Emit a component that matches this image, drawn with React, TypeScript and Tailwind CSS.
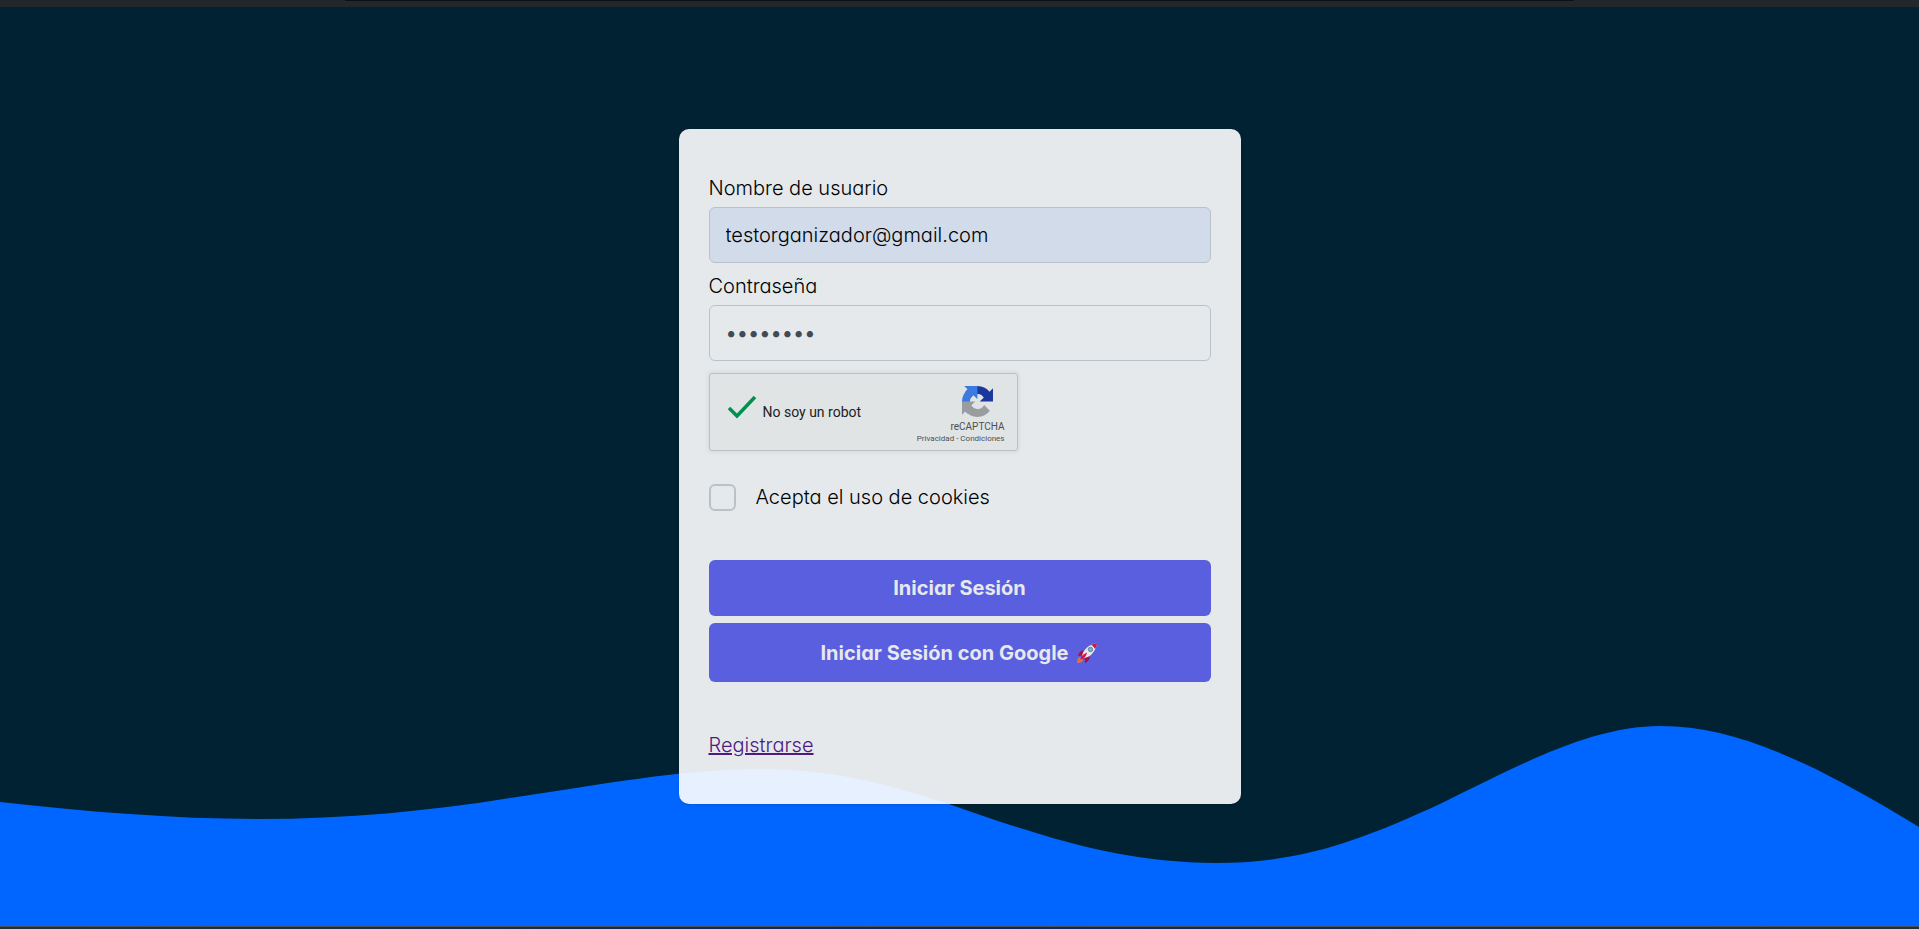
import React, { useState } from 'react';

function RecaptchaLogo() {
  return (
    <svg width="31" height="31" viewBox="0 0 64 64" aria-hidden="true">
      <path
        fill="#1c3aa9"
        d="M64 31.955l-.033-1.37V4.687l-7.16 7.16C50.948 4.674 42.033.093 32.05.093c-10.4 0-19.622 4.96-25.458 12.64l11.736 11.86a15.55 15.55 0 0 1 4.754-5.334c2.05-1.6 4.952-2.906 8.968-2.906.485 0 .86.057 1.135.163 4.976.393 9.288 3.14 11.828 7.124l-8.307 8.307L64 31.953"
      />
      <path
        fill="#4285f4"
        d="M31.862.094l-1.37.033H4.594l7.16 7.16C4.58 13.147 0 22.06 0 32.046c0 10.4 4.96 19.622 12.64 25.458L24.5 45.768a15.55 15.55 0 0 1-5.334-4.754c-1.6-2.05-2.906-4.952-2.906-8.968 0-.485.057-.86.163-1.135.393-4.976 3.14-9.288 7.124-11.828l8.307 8.307L31.86.095"
      />
      <path
        fill="#ababab"
        d="M.001 32.045l.033 1.37v25.898l7.16-7.16c5.86 7.173 14.774 11.754 24.76 11.754 10.4 0 19.622-4.96 25.458-12.64l-11.736-11.86a15.55 15.55 0 0 1-4.754 5.334c-2.05 1.6-4.952 2.906-8.968 2.906-.485 0-.86-.057-1.135-.163-4.976-.393-9.288-3.14-11.828-7.124l8.307-8.307c-10.522.04-22.4.066-27.295-.005"
      />
    </svg>
  );
}

function Rocket() {
  return (
    <svg width="22" height="22" viewBox="0 0 44 44" aria-hidden="true">
      <path fill="#be0f45" d="M16 17 C10 17 5 21 4 28 L13 27 Z" />
      <path fill="#be0f45" d="M27 28 C28 34 25 39 18 42 L17 31 Z" />
      <path fill="#f27a4f" d="M9 30 C4 30 2 34 2 42 C9 42 14 40 14 35 Z" />
      <path fill="#fff" d="M12 32 C11 22 20 6 42 2 C39 23 23 34 12 32 Z" />
      <path fill="#e0164f" d="M30 6 C34 4 38 2.500 42 2 C42 6 40 11 38 14 C36 10 33 7 30 6 Z" />
      <path fill="#e0164f" d="M9 35 C9 30 14 24 22 21 C21 28 16 34 9 35 Z" />
      <circle cx="29" cy="15" r="4.500" fill="#8fb8dd" stroke="#5d7f9c" strokeWidth="1.500" />
    </svg>
  );
}

function Wave() {
  return (
    <svg
      className="absolute bottom-0 left-0 w-full h-[206px]"
      viewBox="0 720 1919 206"
      preserveAspectRatio="none"
      aria-hidden="true"
    >
      <path
        fill="#0066ff"
        d="M0 802 C90 812 175 819 260 819 C345 819 430 811 510 798 C600 785 680 769 762 769 C830 769 885 783 949 804 C1040 836 1120 863 1216 863 C1300 863 1360 841 1442 803 C1520 765 1590 726 1661 726 C1740 726 1820 767 1919 827 L1919 926 L0 926 Z"
      />
    </svg>
  );
}

export default function App() {
  const [username, setUsername] = useState('testorganizador@gmail.com');
  const [password, setPassword] = useState('password');
  const [cookies, setCookies] = useState(false);

  return (
    <div className="min-h-screen flex flex-col bg-[#002233] font-['Inter','Liberation_Sans',sans-serif] [font-feature-settings:'cv11'] text-xl leading-[30px] font-light text-black">
      {/* Top bar */}
      <div className="h-[7px] bg-[#22272b] flex justify-center items-start">
        <div className="w-[64%] h-px bg-[#0d0f14]" />
      </div>

      <main className="relative flex-1 flex items-center justify-center">
        <Wave />

        {/* Login card */}
        <form
          className="relative w-full max-w-[562px] bg-white opacity-90 rounded-[10px] px-[30px] py-11 shadow-sm"
          onSubmit={(e) => e.preventDefault()}
        >
          <label htmlFor="username" className="block mb-1">Nombre de usuario</label>
          <input
            id="username"
            type="text"
            value={username}
            onChange={(e) => setUsername(e.target.value)}
            className="block w-full h-14 px-4 rounded-md border border-[#ced4da] bg-[#e8f0fe]"
          />

          <label htmlFor="password" className="block mt-2 mb-1">Contraseña</label>
          <input
            id="password"
            type="password"
            value={password}
            onChange={(e) => setPassword(e.target.value)}
            className="block w-full h-14 px-4 rounded-md border border-[#ced4da] bg-white text-[#495057] font-normal"
          />

          {/* Captcha */}
          <div className="mt-3 w-[309px] h-[78px] flex justify-between rounded-[3px] border border-[#d3d3d3] bg-[#f9f9f9] shadow-[0_0_4px_1px_rgba(0,0,0,0.08)] font-[Roboto,'Liberation_Sans',sans-serif] font-normal">
            <div className="flex items-center pl-[17px] gap-[6px]">
              <svg width="30" height="30" viewBox="0 0 30 30" fill="none" aria-hidden="true" className="mb-2">
                <path d="M2 15 L10 23 L28 4" stroke="#009e55" strokeWidth="3.500" />
              </svg>
              <span className="text-sm text-[#222]">No soy un robot</span>
            </div>
            <div className="flex flex-col items-end pt-3 pr-3 text-[#555]">
              <div className="pr-3">
                <RecaptchaLogo />
              </div>
              <span className="mt-1 text-[10px] leading-3">reCAPTCHA</span>
              <span className="text-[8px] leading-3">
                <a href="#privacidad">Privacidad</a> - <a href="#condiciones">Condiciones</a>
              </span>
            </div>
          </div>

          <div className="mt-[31px] flex items-center gap-5">
            <input
              id="cookies"
              type="checkbox"
              checked={cookies}
              onChange={(e) => setCookies(e.target.checked)}
              className="appearance-none size-[27px] rounded-md border-2 border-[#ced4da] bg-white checked:bg-[#6366f1]"
            />
            <label htmlFor="cookies">Acepta el uso de cookies</label>
          </div>

          <div className="mt-12 flex flex-col gap-[7px]">
            <button type="submit" className="h-14 rounded-md bg-[#6366f1] text-white font-bold">
              Iniciar Sesión
            </button>
            <button
              type="button"
              className="h-[59px] rounded-md bg-[#6366f1] text-white font-bold flex items-center justify-center gap-2"
            >
              Iniciar Sesión con Google
              <Rocket />
            </button>
          </div>

          <div className="mt-12">
            <a href="#registro" className="text-[#551a8b] underline">Registrarse</a>
          </div>
        </form>
      </main>

      {/* Bottom bar */}
      <div className="h-[3px] border-t border-[#44505a] bg-linear-to-r from-[#1f2f38] via-[#10245c] to-[#1f2f38]" />
    </div>
  );
}
